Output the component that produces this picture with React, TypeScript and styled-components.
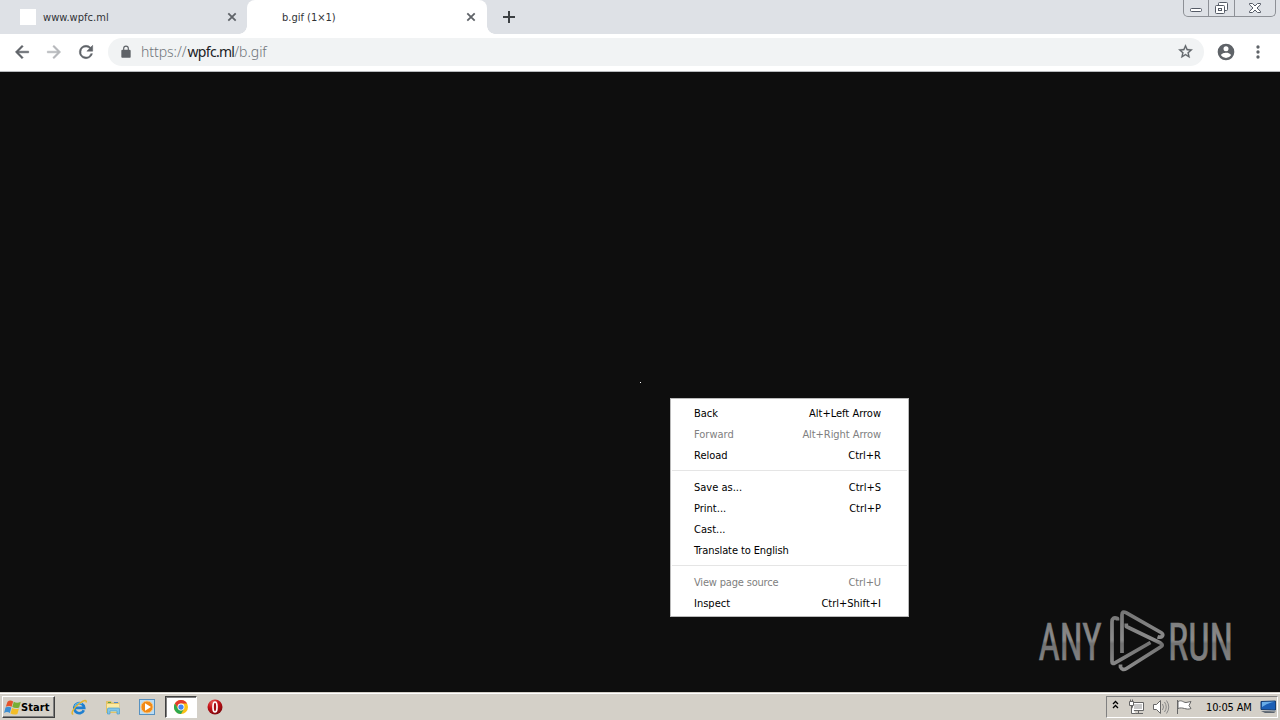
import { Fragment } from 'react';
import styled, { createGlobalStyle } from 'styled-components';

const COLOR = {
  TAB_STRIP: '#dee1e6',
  ICON: '#5f6368',
  OMNIBOX: '#f1f3f4',
  PAGE: '#0e0e0e',
  TASKBAR: '#d4d0c8',
} as const;

const UI_FONT = `'DejaVu Sans Condensed', 'DejaVu Sans', sans-serif`;

const GlobalStyle = createGlobalStyle`
  * {
    box-sizing: border-box;
  }

  body {
    margin: 0;
    overflow: hidden;
    font-family: ${UI_FONT};
    font-stretch: condensed;
    font-size: 11px;
  }

  svg {
    display: block;
    flex-shrink: 0;
  }
`;

const Desktop = styled.div`
  display: flex;
  flex-direction: column;
  width: 1280px;
  height: 720px;
  background: ${COLOR.PAGE};
`;

const Label = styled.span<{ $spacing?: number }>`
  white-space: pre;
  letter-spacing: ${({ $spacing = 0 }) => $spacing}px;
`;

/* ---------- Browser ---------- */

const TabStrip = styled.div`
  display: flex;
  height: 34px;
  background: ${COLOR.TAB_STRIP};
`;

const Tab = styled.div<{ $active?: boolean }>`
  position: relative;
  display: flex;
  align-items: center;
  width: ${({ $active }) => ($active ? 240 : 247)}px;
  padding: 0 ${({ $active }) => ($active ? 10 : 9)}px 0
    ${({ $active }) => ($active ? 35 : 20)}px;
  border-radius: 8px 8px 0 0;
  color: #303236;
  background: ${({ $active }) => ($active ? '#fff' : 'transparent')};

  &::before,
  &::after {
    content: '';
    display: ${({ $active }) => ($active ? 'block' : 'none')};
    position: absolute;
    bottom: 0;
    width: 8px;
    height: 8px;
  }

  &::before {
    left: -8px;
    background: radial-gradient(circle at 0 0, transparent 7.5px, #fff 8px);
  }

  &::after {
    right: -8px;
    background: radial-gradient(circle at 100% 0, transparent 7.5px, #fff 8px);
  }

  svg {
    margin-left: auto;
  }
`;

const Favicon = styled.div`
  width: 16px;
  height: 16px;
  margin-right: 7px;
  background: #fff;
`;

const NewTab = styled.div`
  display: flex;
  align-items: center;
  padding-left: 15px;
`;

const WindowButtons = styled.div`
  display: flex;
  height: 17px;
  margin: 0 4px 0 auto;
  border: 1px solid #8d9096;
  border-top: 0;
  border-radius: 0 0 5px 5px;
`;

const WindowButton = styled.div<{ $width: number }>`
  display: flex;
  justify-content: center;
  width: ${({ $width }) => $width}px;

  & + & {
    border-left: 1px solid #8d9096;
  }
`;

const Toolbar = styled.div`
  display: flex;
  align-items: center;
  height: 38px;
  padding: 0 12px 2px;
  border-bottom: 1px solid #b8babd;
  background: #fff;
`;

const NavButtons = styled.div`
  display: flex;
  gap: 12px;
  width: 96px;
`;

const Omnibox = styled.div`
  display: flex;
  align-items: center;
  width: 1096px;
  height: 28px;
  padding: 0 10px 0 11px;
  border-radius: 14px;
  background: ${COLOR.OMNIBOX};

  > svg:last-child {
    margin-left: auto;
  }
`;

const Url = styled.span`
  margin-left: 8px;
  font-family: 'Noto Sans', sans-serif;
  font-weight: 300;
  font-size: 14px;
  letter-spacing: -0.05px;
  color: #70757a;

  b {
    margin-left: 1px;
    font-weight: 400;
    letter-spacing: -0.7px;
    color: #202124;
  }
`;

const ToolbarMenu = styled.div`
  display: flex;
  gap: 12px;
  margin-left: 12px;
`;

const Page = styled.main`
  position: relative;
  flex: 1;
`;

const Pixel = styled.div`
  position: absolute;
  left: 640px;
  top: 310px;
  width: 1px;
  height: 1px;
  background: #fff;
`;

const Watermark = styled.svg`
  position: absolute;
  left: 1030px;
  top: 528px;
  overflow: visible;
`;

/* ---------- Context menu ---------- */

const ContextMenu = styled.div`
  position: absolute;
  left: 670px;
  top: 326px;
  width: 239px;
  height: 219px;
  padding-top: 4px;
  border: 1px solid #bababa;
  background: #fff;
`;

const MenuRow = styled.div<{ $disabled?: boolean }>`
  display: flex;
  align-items: center;
  justify-content: space-between;
  height: 21px;
  padding: 0 27px 0 23px;
  color: ${({ $disabled }) => ($disabled ? '#808080' : '#000')};
`;

const MenuDivider = styled.div`
  height: 1px;
  margin: 4px 1px 6px;
  background: #e5e5e5;
`;

/* ---------- Taskbar ---------- */

const Taskbar = styled.div`
  display: flex;
  align-items: center;
  height: 28px;
  padding: 1px 2px 0 1px;
  border-top: 1px solid ${COLOR.TASKBAR};
  box-shadow: inset 0 1px #fff;
  background: ${COLOR.TASKBAR};
`;

const StartButton = styled.div`
  display: flex;
  align-items: center;
  width: 53px;
  height: 22px;
  margin-left: 1px;
  padding-left: 1px;
  border: 1px solid;
  border-color: #fff #404040 #404040 #fff;
  box-shadow: inset -1px -1px #808080;
  font-weight: 700;
  color: #000;
`;

const QuickLaunch = styled.div`
  display: flex;
  align-items: center;
  margin-left: 8px;
`;

const LaunchItem = styled.div<{ $active?: boolean }>`
  display: flex;
  align-items: center;
  justify-content: center;
  width: ${({ $active }) => ($active ? 32 : 34)}px;
  height: 22px;
  margin: 0 ${({ $active }) => ($active ? 1 : 0)}px;
  border: ${({ $active }) => ($active ? '1px solid' : 0)};
  border-color: #404040 #fff #fff #404040;
  box-shadow: ${({ $active }) => ($active ? 'inset 1px 1px #808080' : 'none')};
  background: ${({ $active }) => ($active ? '#fff' : 'transparent')};

  &:first-child {
    width: 33px;
  }
`;

const Tray = styled.div`
  display: flex;
  align-items: center;
  width: 172px;
  height: 22px;
  margin-left: auto;
  padding-left: 5px;
  border: 1px solid;
  border-color: #808080 #fff #fff #808080;
  color: #000;
`;

const Clock = styled.div`
  display: flex;
  align-items: center;
  width: 54px;
  margin-left: 12px;
`;

/* ---------- Icons ---------- */

const MaterialIcon = ({
  d,
  size = 20,
  color = COLOR.ICON,
  weight = 0,
}: {
  d: string;
  size?: number;
  color?: string;
  weight?: number;
}) => (
  <svg
    width={size}
    height={size}
    viewBox="0 0 24 24"
    fill={color}
    stroke={color}
    strokeWidth={weight}
  >
    <path d={d} />
  </svg>
);

const ICON_PATH = {
  BACK: 'M20 11H7.83l5.59-5.59L12 4l-8 8 8 8 1.41-1.41L7.83 13H20v-2z',
  FORWARD: 'M12 4l-1.41 1.41L16.17 11H4v2h12.17l-5.58 5.59L12 20l8-8z',
  RELOAD:
    'M17.65 6.35A7.96 7.96 0 0 0 12 4a8 8 0 1 0 7.73 10h-2.08A6 6 0 1 1 12 6c1.66 0 3.14.69 4.22 1.78L13 11h7V4l-2.35 2.35z',
  LOCK: 'M18 8h-1V6A5 5 0 0 0 7 6v2H6a2 2 0 0 0-2 2v10c0 1.1.9 2 2 2h12a2 2 0 0 0 2-2V10a2 2 0 0 0-2-2zM9 6a3 3 0 0 1 6 0v2H9V6z',
  STAR: 'M22 9.24l-7.19-.62L12 2 9.19 8.63 2 9.24l5.46 4.73L5.82 21 12 17.27 18.18 21l-1.63-7.03L22 9.24zM12 15.4l-3.76 2.27 1-4.28-3.32-2.88 4.38-.38L12 6.1l1.71 4.04 4.38.38-3.32 2.88 1 4.28L12 15.4z',
  PROFILE:
    'M12 2a10 10 0 1 0 0 20 10 10 0 0 0 0-20zm0 3a3 3 0 1 1 0 6 3 3 0 0 1 0-6zm0 14.2a7.2 7.2 0 0 1-6-3.22c.03-1.99 4-3.08 6-3.08s5.97 1.09 6 3.08a7.2 7.2 0 0 1-6 3.22z',
  MORE: 'M12 8a2 2 0 1 0 0-4 2 2 0 0 0 0 4zm0 2a2 2 0 1 0 0 4 2 2 0 0 0 0-4zm0 6a2 2 0 1 0 0 4 2 2 0 0 0 0-4z',
};

const CloseIcon = () => (
  <svg width="12" height="12" fill="none" stroke={COLOR.ICON} strokeWidth="1.8">
    <path d="M2.300 2.300l7.400 7.400M9.700 2.300l-7.400 7.400" />
  </svg>
);

const WindowsFlag = () => (
  <svg width="17" height="17" viewBox="0 0 16 16">
    <path fill="#e5532a" d="M3.300 2.500q2.500-2 5.300-.2L7.200 7.300Q4.500 5.700 1.700 7.300z" />
    <path fill="#77ae35" d="M9.200 2.700q3 1.600 6.600 0L14.300 8q-3.300 1.300-6.500-.4z" />
    <path fill="#3d8ed2" d="M1.400 8.100q2.800-1.600 5.500 0L5.500 13.200Q3 11.500.1 13.100z" />
    <path fill="#f4bd27" d="M7.600 8.500q3 1.700 6.500.5L12.600 14.200q-3.400 1.200-6.500-.6z" />
  </svg>
);

const ExplorerLogo = () => (
  <svg width="17" height="17" fill="none">
    <path
      d="M12.800 11.200A5 5 0 1 1 13.200 8.900H4.500"
      stroke="#1e7fd0"
      strokeWidth="2.700"
    />
    <path d="M3.600 7.500A5 5 0 0 1 11 4.700" stroke="#66c1f1" strokeWidth="1.200" />
    <path
      d="M2.300 15C-1 15.500 3 8 9 4c4-2.700 7-3.500 6-.5"
      stroke="#e5b52f"
      strokeWidth="1.500"
    />
  </svg>
);

const FolderIcon = () => (
  <svg width="16" height="16">
    <path fill="#e3c266" d="M1 2h5l1 1.500h7.500V14H1z" />
    <path fill="#fbeaa2" d="M2 5h12v8H2z" />
    <path fill="#5fa343" d="M3 3h3v1H3z" />
    <path fill="#5389c5" d="M9 3h4v1H9z" />
    <path
      fill="#81c5e8"
      stroke="#4c9dcc"
      strokeWidth=".7"
      d="M2.500 15v-5q0-1 1-1h10q1 0 1 1v5H12v-3H5v3z"
    />
  </svg>
);

const MediaPlayerIcon = () => (
  <svg width="16" height="16">
    <rect x=".5" y=".5" width="15" height="15" fill="#b9dcf5" stroke="#5791c0" />
    <circle cx="8" cy="8" r="6" fill="#f18a16" stroke="#ffc477" />
    <path fill="#fff" d="M6 4.300v7.400L12 8z" />
  </svg>
);

const ChromeLogo = () => (
  <svg width="14" height="14" viewBox="0 0 24 24">
    <circle cx="12" cy="12" r="12" fill="#fbc116" />
    <path fill="#e33b2e" d="M1.600 6A12 12 0 0 1 22.400 6H12a6 6 0 0 0-5.200 9z" />
    <path fill="#2da94f" d="M1.600 6A12 12 0 0 0 12 24l5.200-9a6 6 0 0 1-10.400 0z" />
    <circle cx="12" cy="12" r="5.900" fill="#fff" />
    <circle cx="12" cy="12" r="4.500" fill="#4285f4" />
  </svg>
);

const OperaLogo = () => (
  <svg width="16" height="16">
    <defs>
      <radialGradient id="opera" cx=".35" cy=".2" r=".8">
        <stop stopColor="#e55a55" />
        <stop offset=".5" stopColor="#c51218" />
        <stop offset="1" stopColor="#82070c" />
      </radialGradient>
    </defs>
    <circle cx="8" cy="8" r="7.500" fill="url(#opera)" />
    <ellipse cx="8" cy="8" rx="2" ry="5" fill="#a50d12" stroke="#fff" strokeWidth="1.700" />
  </svg>
);

const TrayIcons = () => (
  <svg width="82" height="18" fill="none" stroke="#666">
    <path stroke="#000" strokeWidth="1.300" d="M1 6l2.500-2.500L6 6M1 10l2.500-2.500L6 10" />
    <path fill="#fff" d="M20.500 4.500h11v8h-11z" />
    <path fill="#c8c8c8" stroke="none" d="M22 6h8v5h-8z" />
    <path d="M26.500 13v2M22 15.500h9" />
    <path fill="#fff" d="M17.500 3.500h4v4h-4zM18.500 1.500v2M20.500 1.500v2M19.500 8v7.500h4" />
    <path fill="#fff" d="M41.500 6.500h3l4-4v13l-4-4h-3z" />
    <path stroke="#888" d="M50.500 6q2 3 0 6M52.500 4q3.500 5 0 10M54.500 2.500q4.500 6.500 0 13" />
    <path fill="#fff" d="M65.500 2v14M66 3.500c4-2 5 1 8 1l5-1-2 4 2 3c-5 2-8-2-13 0z" />
  </svg>
);

const DesktopIcon = () => (
  <svg width="17" height="14">
    <path fill="#1b5eb5" stroke="#163d72" d="M1 1.500l14.500-.5v9L1 9.500z" />
    <path fill="#68ace8" d="M2 2l12.500-.3Q7 3 2 7z" />
    <path fill="#5b6570" d="M1 11l15 .5-2 1.500H5z" />
  </svg>
);

const AnyRunLogo = () => (
  <Watermark width="210" height="80">
    <defs>
      <linearGradient id="fade" x1="0" y1="10" x2="0" y2="70" gradientUnits="userSpaceOnUse">
        <stop stopColor="#747474" />
        <stop offset=".5" stopColor="#8c8c8c" />
        <stop offset=".56" stopColor="#727272" />
        <stop offset="1" stopColor="#8c8c8c" />
      </linearGradient>
    </defs>
    <g
      fill="url(#fade)"
      stroke="url(#fade)"
      strokeWidth=".7"
      fontFamily="Roboto, sans-serif"
      fontSize="52"
      fontWeight="400"
    >
      <text x="8.500" y="59.500" textLength="63" lengthAdjust="spacingAndGlyphs">
        ANY
      </text>
      <text x="138" y="59.500" textLength="65" lengthAdjust="spacingAndGlyphs">
        RUN
      </text>
    </g>
    <g
      fill="none"
      stroke="url(#fade)"
      strokeWidth="3.700"
      strokeLinejoin="round"
    >
      <path d="M87.500 20.500V18.500Q82 16.500 82 22v39.500q0 3 3 1.300L120.500 42.500" />
      <path d="M92 53V15q0-4.500 4-2.300L131 32.500q3 2 1 4-1.500 1.300-4.500.2" />
      <path d="M96.300 23.500v3L130.500 43q3.500 2 0 4L96.500 68.500q-4 2.500-6-1.500v-2.500" />
    </g>
  </Watermark>
);

/* ---------- Content ---------- */

type MenuItem = {
  label: string;
  spacing?: number;
  shortcut?: string;
  shortcutSpacing?: number;
  disabled?: boolean;
};

const MENU_GROUPS: MenuItem[][] = [
  [
    { label: 'Back', shortcut: 'Alt+Left Arrow' },
    {
      label: 'Forward',
      shortcut: 'Alt+Right Arrow',
      shortcutSpacing: -0.06,
      disabled: true,
    },
    { label: 'Reload', shortcut: 'Ctrl+R' },
  ],
  [
    { label: 'Save as...', shortcut: 'Ctrl+S' },
    { label: 'Print...', shortcut: 'Ctrl+P' },
    { label: 'Cast...' },
    { label: 'Translate to English', spacing: -0.1 },
  ],
  [
    {
      label: 'View page source',
      spacing: -0.18,
      shortcut: 'Ctrl+U',
      shortcutSpacing: -0.1,
      disabled: true,
    },
    { label: 'Inspect', shortcut: 'Ctrl+Shift+I' },
  ],
];

const BrowserTabs = () => (
  <TabStrip>
    <Tab>
      <Favicon />
      <Label $spacing={0.05}>www.wpfc.ml</Label>
      <CloseIcon />
    </Tab>
    <Tab $active>
      <Label>b.gif (1×1)</Label>
      <CloseIcon />
    </Tab>
    <NewTab>
      <svg width="14" height="14" stroke="#3c4043" strokeWidth="2">
        <path d="M7 1v12M1 7h12" />
      </svg>
    </NewTab>
    <WindowButtons>
      <WindowButton $width={24}>
        <svg width="14" height="16" fill="#fff" stroke="#555b66">
          <rect x="1.500" y="8.500" width="11" height="3" rx="1" />
        </svg>
      </WindowButton>
      <WindowButton $width={26}>
        <svg width="14" height="16" fill="#fff" stroke="#555b66">
          <rect x="3.500" y="2.500" width="9" height="8" rx="1" />
          <rect x=".5" y="5.500" width="9" height="8" rx="1" />
          <rect x="3.500" y="8.500" width="3" height="2" />
        </svg>
      </WindowButton>
      <WindowButton $width={41}>
        <svg width="14" height="16" fill="#fff" stroke="#555b66">
          <path d="M1.500 3.500h3L7 6l2.500-2.500h3v1.200L9 8l3.500 3.300v1.200h-3L7 10l-2.500 2.500h-3v-1.200L5 8 1.500 4.700z" />
        </svg>
      </WindowButton>
    </WindowButtons>
  </TabStrip>
);

const BrowserToolbar = () => (
  <Toolbar>
    <NavButtons>
      <MaterialIcon d={ICON_PATH.BACK} weight={0.6} />
      <MaterialIcon d={ICON_PATH.FORWARD} color="#b5b7ba" weight={0.6} />
      <MaterialIcon d={ICON_PATH.RELOAD} weight={0.6} />
    </NavButtons>
    <Omnibox>
      <MaterialIcon d={ICON_PATH.LOCK} size={14} />
      <Url>
        https://<b>wpfc.ml</b>/b.gif
      </Url>
      <MaterialIcon d={ICON_PATH.STAR} size={17} weight={0.4} />
    </Omnibox>
    <ToolbarMenu>
      <MaterialIcon d={ICON_PATH.PROFILE} />
      <MaterialIcon d={ICON_PATH.MORE} />
    </ToolbarMenu>
  </Toolbar>
);

const PageMenu = () => (
  <ContextMenu>
    {MENU_GROUPS.map((group, index) => (
      <Fragment key={group[0].label}>
        {index > 0 && <MenuDivider />}
        {group.map(({ label, spacing, shortcut, shortcutSpacing, disabled }) => (
          <MenuRow key={label} $disabled={disabled}>
            <Label $spacing={spacing}>{label}</Label>
            {shortcut && <Label $spacing={shortcutSpacing}>{shortcut}</Label>}
          </MenuRow>
        ))}
      </Fragment>
    ))}
  </ContextMenu>
);

const WindowsTaskbar = () => (
  <Taskbar>
    <StartButton>
      <WindowsFlag />
      <Label $spacing={0.1}>Start</Label>
    </StartButton>
    <QuickLaunch>
      <LaunchItem>
        <ExplorerLogo />
      </LaunchItem>
      <LaunchItem>
        <FolderIcon />
      </LaunchItem>
      <LaunchItem>
        <MediaPlayerIcon />
      </LaunchItem>
      <LaunchItem $active>
        <ChromeLogo />
      </LaunchItem>
      <LaunchItem>
        <OperaLogo />
      </LaunchItem>
    </QuickLaunch>
    <Tray>
      <TrayIcons />
      <Clock>
        <Label $spacing={-0.15}>10:05 AM</Label>
      </Clock>
      <DesktopIcon />
    </Tray>
  </Taskbar>
);

const App = () => (
  <Desktop>
    <GlobalStyle />
    <BrowserTabs />
    <BrowserToolbar />
    <Page>
      <Pixel />
      <AnyRunLogo />
      <PageMenu />
    </Page>
    <WindowsTaskbar />
  </Desktop>
);

export default App;
